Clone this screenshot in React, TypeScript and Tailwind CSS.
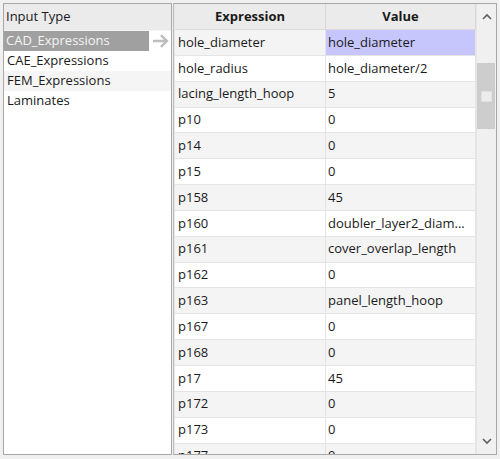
import React from 'react';

const rows: [string, string][] = [
  ['hole_diameter', 'hole_diameter'],
  ['hole_radius', 'hole_diameter/2'],
  ['lacing_length_hoop', '5'],
  ['p10', '0'],
  ['p14', '0'],
  ['p15', '0'],
  ['p158', '45'],
  ['p160', 'doubler_layer2_diam...'],
  ['p161', 'cover_overlap_length'],
  ['p162', '0'],
  ['p163', 'panel_length_hoop'],
  ['p167', '0'],
  ['p168', '0'],
  ['p17', '45'],
  ['p172', '0'],
  ['p173', '0'],
  ['p177', '0'],
];

const types = ['CAD_Expressions', 'CAE_Expressions', 'FEM_Expressions', 'Laminates'];

export default function App() {
  return (
    <div
      className="w-[500px] h-[459px] bg-[#f0f0f0] flex gap-[1px] pt-[3px] px-[3px] pb-[4px] text-[13px] text-[#1a1a1a]"
      style={{ fontFamily: '"Open Sans", "Noto Sans", sans-serif' }}
    >
      {/* left list */}
      <div className="w-[169px] border border-[#a8a8a8] bg-white flex flex-col overflow-hidden">
        <div className="h-[27px] bg-[#ebebeb] flex items-center pl-[2px] border-b border-[#f4f4f4]">Input Type</div>
        {types.map((t, i) => (
          <div key={t} className={`h-[20px] flex items-center ${i === 2 ? 'bg-[#f5f5f5]' : 'bg-white'}`}>
            {i === 0 ? (
              <>
                <div className="w-[146px] h-full bg-[#a0a0a0] text-[#f4f4f4] flex items-center pl-[2px]">{t}</div>
                <svg width="20" height="16" viewBox="0 0 20 16" className="ml-[2px]">
                  <path d="M2 8 H16 M10 2 L16 8 L10 14" fill="none" stroke="#bdbdbd" strokeWidth="2.4" />
                </svg>
              </>
            ) : (
              <div className="pl-[3px]">{t}</div>
            )}
          </div>
        ))}
      </div>

      {/* right grid */}
      <div className="flex-1 border border-[#a8a8a8] border-l-[#bcbcbc] bg-white flex overflow-hidden">
        <div className="flex-1 flex flex-col overflow-hidden border-l border-[#e6e6e6]">
          <div className="h-[26px] shrink-0 flex bg-[#ebebeb] border-b border-[#dcdcdc] font-bold">
            <div className="w-[151px] flex items-center justify-center border-r border-[#d8d8d8]">Expression</div>
            <div className="w-[150px] flex items-center justify-center border-r border-[#d8d8d8]">Value</div>
          </div>
          {rows.map(([e, v], i) => (
            <div
              key={e}
              className={`h-[25.85px] shrink-0 flex border-b border-[#e4e4e4] ${i % 2 === 0 ? 'bg-[#f4f4f4]' : 'bg-white'}`}
            >
              <div className="w-[151px] flex items-center pl-[3px] border-r border-[#e4e4e4] whitespace-nowrap overflow-hidden">{e}</div>
              <div
                className={`w-[150px] flex items-center pl-[2px] border-r border-[#e4e4e4] whitespace-nowrap overflow-hidden ${i === 0 ? 'bg-[#c6c6fd]' : ''}`}
              >
                {v}
              </div>
            </div>
          ))}
        </div>
        {/* scrollbar */}
        <div className="w-[20px] bg-[#f0f0f0] flex flex-col border-l border-[#e6e6e6]">
          <div className="h-[26px] flex items-center justify-center">
            <svg width="10" height="8" viewBox="0 0 10 8">
              <path d="M1 6 L5 2 L9 6" fill="none" stroke="#606060" strokeWidth="1.6" />
            </svg>
          </div>
          <div className="h-[33px]" />
          <div className="h-[66px] w-[18px] bg-[#cdcdcd] flex items-center justify-center">
            <div className="w-[11px] h-[11px] bg-[#ececec] border border-[#e0e0e0]" />
          </div>
          <div className="flex-1" />
          <div className="h-[26px] flex items-center justify-center">
            <svg width="10" height="8" viewBox="0 0 10 8">
              <path d="M1 2 L5 6 L9 2" fill="none" stroke="#606060" strokeWidth="1.6" />
            </svg>
          </div>
        </div>
      </div>
    </div>
  );
}
